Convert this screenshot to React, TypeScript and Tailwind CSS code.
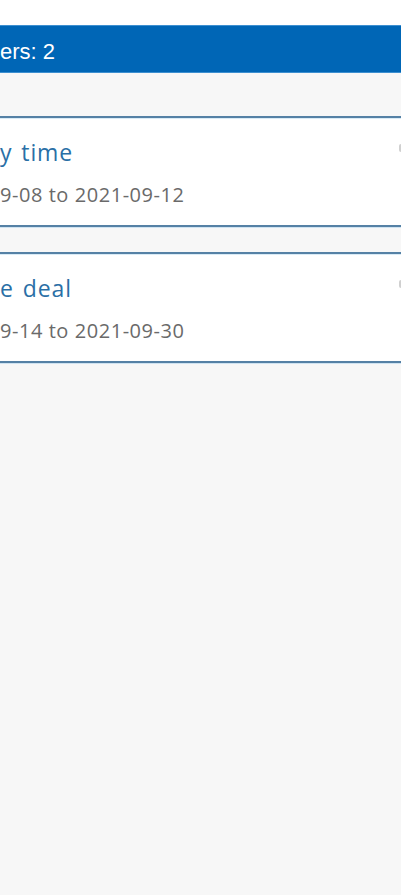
import React from "react";

function Card({ title, dates }: { title: string; dates: string }) {
  return (
    <div className="relative h-[111px] bg-white border-y-2 border-[#5581a5] shadow-[0_1px_0_#cfe3f1,inset_0_1px_0_#d9ebf6] overflow-hidden">
      <div className="absolute right-0 top-[26px] w-[2px] h-[8px] bg-[#d0d0d0] rounded-l" />
      <div className="flex flex-col">
        <div
          className="ml-0 mt-[20px] text-[23px] leading-[28px] tracking-[0.9px] [word-spacing:2px] text-[#2a6fa6] whitespace-nowrap"
          style={{ fontFamily: "'Open Sans', 'Noto Sans', sans-serif" }}
        >
          {title}
        </div>
        <div
          className="ml-0 mt-[17px] text-[20px] leading-[24px] tracking-[0.55px] text-[#6a6a6a] whitespace-nowrap"
          style={{ fontFamily: "'Open Sans', 'Noto Sans', sans-serif" }}
        >
          {dates}
        </div>
      </div>
    </div>
  );
}

export default function App() {
  return (
    <div className="w-[401px] h-[895px] bg-[#f7f7f7] overflow-hidden flex flex-col">
      <div className="h-[25px] bg-white shrink-0" />
      <div className="h-[48px] bg-[#0066b6] border-y border-[#3d8fd0] shrink-0 flex items-center overflow-hidden">
        <div
          className="ml-0 mt-[6px] text-white text-[22px] leading-[24px] whitespace-nowrap"
          style={{ fontFamily: "'Liberation Sans', Arial, sans-serif" }}
        >
          ers: 2
        </div>
      </div>
      <div className="h-[43px] shrink-0 bg-[#f7f7f7]" />
      <Card title="y time" dates="9-08 to 2021-09-12" />
      <div className="h-[25px] shrink-0" />
      <Card title="e deal" dates="9-14 to 2021-09-30" />
    </div>
  );
}
